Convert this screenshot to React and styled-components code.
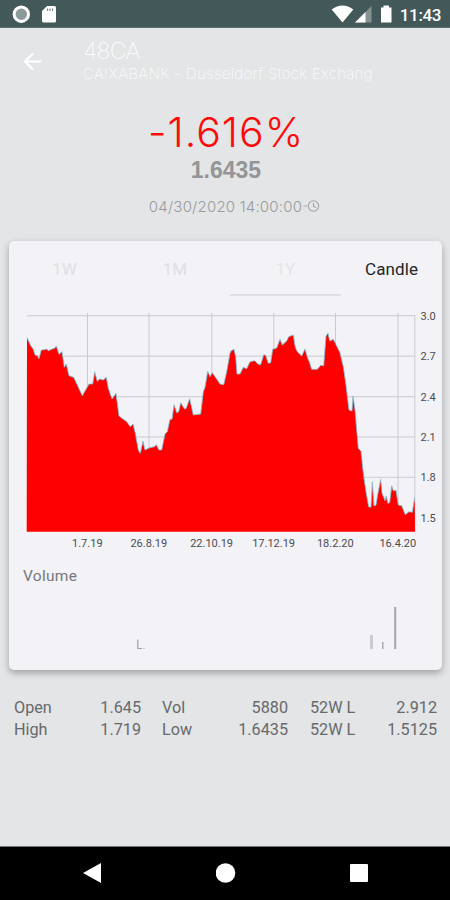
import React from 'react';
import styled, { createGlobalStyle } from 'styled-components';

const GlobalStyle = createGlobalStyle`
    * {
        box-sizing: border-box;
    }

    body {
        margin: 0;
        background-color: #e3e5e7;
    }
`;

const Screen = styled.div`
    display: flex;
    flex-direction: column;
    width: 450px;
    height: 900px;
    overflow: hidden;
    background-color: #e3e5e7;
    font-family: Roboto, sans-serif;
`;

const StatusBar = styled.div`
    display: flex;
    justify-content: space-between;
    height: 28px;
    padding: 0 9px 0 12px;
    background-color: #435858;
    border-bottom: 1px solid #5d6f6f;
`;

const StatusGroup = styled.div`
    display: flex;
    align-items: center;
    color: #fff;
    font-size: 17px;
    font-weight: 500;
    line-height: 28px;

    svg {
        display: block;
    }
`;

const Time = styled.span`
    margin-left: 7px;
    padding-top: 2px;
    letter-spacing: -.4px;
`;

const Header = styled.header`
    display: flex;
    height: 76px;
    padding: 11px 0 0 23px;
    color: #fafbfb;
    font-family: Inter, sans-serif;
    font-weight: 200;
`;

const BackButton = styled.button`
    width: 60px;
    height: 40px;
    padding: 3px 0 0;
    border: 0;
    background: none;
    text-align: left;

    svg {
        display: block;
    }
`;

const Title = styled.div`
    font-size: 23px;
    line-height: 24px;
    letter-spacing: -.6px;
    white-space: nowrap;
`;

const SubTitle = styled.div`
    font-size: 15px;
    line-height: 22px;
    letter-spacing: .3px;
    white-space: nowrap;
`;

const Quote = styled.section`
    display: flex;
    flex-direction: column;
    align-items: center;
    height: 137px;
`;

const Change = styled.div`
    height: 54px;
    margin-left: 2px;
    color: #ff0a0a;
    font-family: Inter, sans-serif;
    font-size: 41px;
    font-weight: 300;
    line-height: 56px;
    letter-spacing: 1px;
`;

const Price = styled.div`
    height: 30px;
    margin-left: 2px;
    color: #949596;
    font-family: 'Liberation Sans', Arial, sans-serif;
    font-size: 23px;
    font-weight: 700;
    line-height: 24px;
`;

const Updated = styled.div`
    display: flex;
    align-items: center;
    height: 28px;
    margin-top: 4px;
    margin-left: 20px;
    color: #999b9c;
    font-family: Inter, sans-serif;
    font-size: 15px;
    font-weight: 300;
    letter-spacing: .2px;
`;

const Card = styled.section`
    display: flex;
    flex-direction: column;
    width: 433px;
    height: 429px;
    margin-left: 9px;
    border-radius: 5px;
    background-color: #f2f2f7;
    box-shadow: 0 3px 7px rgba(0, 0, 0, .3);
`;

const Tabs = styled.div`
    display: grid;
    grid-template-columns: 111px 110px 111px 101px;
    height: 55px;
`;

const Tab = styled.button`
    height: 55px;
    padding: 2px 0 0;
    border: 0;
    border-bottom: 2px solid ${({ active }) => active ? '#dfe0e3' : 'transparent'};
    background: none;
    color: ${({ dark }) => dark ? '#242527' : '#dfe0e3'};
    font-family: Roboto, sans-serif;
    font-size: 17px;
    font-weight: ${({ active }) => active ? 300 : 400};
    letter-spacing: ${({ dark }) => dark ? '.1px' : 0};
    text-align: center;
`;

const Chart = styled.svg`
    display: block;
    font-family: Roboto, sans-serif;
    font-size: 11px;
    fill: #4b4c4f;
`;

const VolumeTitle = styled.div`
    height: 24px;
    padding-left: 14px;
    color: #77787b;
    font-size: 15.5px;
    line-height: 24px;
    letter-spacing: .3px;
`;

const Stats = styled.div`
    display: grid;
    grid-template-columns: 63px 64px 75px 72px 73px 76px;
    grid-auto-rows: 22px;
    padding: 27px 0 0 14px;
    color: #67696b;
    font-size: 16.2px;
    line-height: 22px;
`;

const Label = styled.span`
    padding-left: ${({ indent }) => indent || 0}px;
    white-space: nowrap;
`;

const Value = styled.span`
    text-align: right;
`;

const NavBar = styled.nav`
    display: flex;
    justify-content: space-between;
    align-items: center;
    height: 54px;
    margin-top: auto;
    padding: 0 82px 2px 83px;
    background-color: #000;
    border-top: 1px solid #777;

    svg {
        display: block;
    }
`;

const points = [
    [27, 337.7], [30.3, 345], [33.3, 349.3], [35, 355], [37.3, 355.5], [39, 358.7], [41.3, 350], [44.3, 349.7],
    [46.7, 349], [48.3, 350.7], [52.3, 349], [54.7, 348.3], [56.3, 346], [59, 354.3], [62, 351.7], [64.3, 367.3],
    [66.3, 364], [69, 375.7], [73.7, 377.3], [82.3, 395.7], [89, 384], [92.7, 384], [94.7, 371.7], [97.3, 381.3],
    [99.7, 379], [103.3, 380], [106.3, 377.3], [108.3, 388.3], [112, 399], [116, 393.3], [119, 416], [126.7, 421.7],
    [130.3, 426.7], [133, 424], [135.3, 433.3], [138.3, 450], [140.3, 453.3], [143, 441], [145, 450], [149, 448],
    [154.3, 446.7], [156.3, 444.7], [159, 450], [161.7, 450], [165, 434], [167.3, 431.7], [170, 419.3], [172, 419.3],
    [174, 404.7], [176.7, 412.7], [178.7, 411.7], [180.7, 402.7], [184.3, 408.7], [186, 408.7], [189.7, 398.7],
    [193.3, 415], [200.7, 414], [203.3, 391.7], [205, 387.3], [207.7, 371.3], [210, 376.7], [212.3, 372.7],
    [216.7, 379], [220, 384], [223.7, 384.7], [226.7, 371.7], [230, 353.3], [231.3, 350.7], [234, 349.3],
    [235.7, 356.7], [237, 374], [240, 374], [243.3, 367.3], [246.7, 368.7], [250, 361.7], [254.7, 360.7],
    [258, 364], [260.7, 364.7], [263.7, 354.7], [265.7, 355.3], [268.3, 363.3], [270.7, 362.7], [272.7, 349.3],
    [276.7, 348], [280, 339.3], [282.3, 345], [286.7, 341], [288.7, 336.7], [293.3, 335], [295.3, 347.3],
    [297.3, 351.7], [301.7, 356], [305, 349], [307.7, 358.3], [309.3, 361.7], [311.7, 369.3], [317.3, 369.3],
    [320.7, 365.3], [323.7, 365.7], [326, 336], [328, 333.3], [329.7, 341], [333.3, 339.3], [336.7, 346],
    [340, 352.7], [343.3, 366.7], [346, 385], [349, 410], [352, 411], [353, 396], [355, 410], [358.3, 448.3],
    [361, 451.3], [363.3, 473.3], [366, 491.7], [368.7, 506.7], [371, 507.3], [372.3, 481.7], [374, 506],
    [376, 505], [378, 493], [380.7, 479.3], [382, 493], [385, 500.7], [386.3, 496], [387.7, 503.3],
    [389.7, 502.7], [391.7, 485.7], [393.3, 490.7], [396, 490.3], [398.3, 505], [401.7, 505.7], [405.3, 514.7],
    [409, 511.7], [412.3, 512.3], [414.7, 497.3],
];

const prices = [
    ['3.0', 315.7], ['2.7', 356.2], ['2.4', 396.7], ['2.1', 437], ['1.8', 477.3], ['1.5', 517.5],
];

const dates = [
    ['1.7.19', 87.5], ['26.8.19', 149], ['22.10.19', 211.8], ['17.12.19', 273.8], ['18.2.20', 335.5], ['16.4.20', 398],
];

const volumes = [
    { x: 371.5, height: 14, width: 3, color: '#cbccd0' },
    { x: 382.8, height: 7, width: 1.5, color: '#aaabae' },
    { x: 395.2, height: 42, width: 2, color: '#a4a5a8' },
];

const stats = [
    ['Open', '1.645', 'Vol', '5880', '52W L', '2.912'],
    ['High', '1.719', 'Low', '1.6435', '52W L', '1.5125'],
];

const indents = [0, 0, 21, 0, 22, 0];

const PriceChart = () => {
    const line = points.map(p => p.join(',')).join(' ');

    return (
        <Chart width="433" height="268" viewBox="9 296 433 268">
            {prices.map(([label, y]) => (
                <g key={label}>
                    <line x1="27" x2="415" y1={y} y2={y} stroke="#cbcbcf"/>
                    <text x="420.5" y={y + 4}>{label}</text>
                </g>
            ))}
            {dates.map(([label, x]) => (
                <g key={label}>
                    <line x1={x} x2={x} y1="313" y2="531" stroke="#cbcbcf"/>
                    <text x={x - .2} y="547.3" textAnchor="middle">{label}</text>
                </g>
            ))}
            <line x1="414.8" x2="414.8" y1="315" y2="531" stroke="#cbcbcf"/>
            <polygon points={`26.7,531.7 ${line} 415,531.7`} fill="#ff0000"/>
            <polyline points={line} fill="none" stroke="#7cc4d8" strokeWidth=".8"/>
        </Chart>
    )
};

const VolumeChart = () => (
    <Chart width="433" height="70" viewBox="9 588 433 70">
        <path d="M137.8 639.5V648.5H142M143.5 648.5H144.5" fill="none" stroke="#a0a1a4" strokeWidth="1.2"/>
        {volumes.map(bar => (
            <rect
             key={bar.x}
             x={bar.x - bar.width / 2}
             y={649 - bar.height}
             width={bar.width}
             height={bar.height}
             fill={bar.color}
             />
        ))}
    </Chart>
);

const App = () => {
    return (
        <>
            <GlobalStyle/>
            <Screen>
                <StatusBar>
                    <StatusGroup>
                        <svg width="46" height="28" viewBox="12 0 46 28">
                            <circle cx="21.3" cy="14.2" r="7.2" fill="#8b9999" stroke="#fff" strokeWidth="3"/>
                            <path d="M47 6H54.5Q56 6 56 7.5V21Q56 22.5 54.5 22.5H43.5Q42 22.5 42 21V11Z" fill="#fff"/>
                            <path d="M47.5 8.5V11M50 8.5V11M52.5 8.5V11" stroke="#7d8b8b" strokeWidth="1.2"/>
                        </svg>
                    </StatusGroup>
                    <StatusGroup>
                        <svg width="62" height="28" viewBox="332 0 62 28">
                            <path d="M332.7 9.5Q343.5 1.5 354.3 9.5L343.5 22.5Z" fill="#fff"/>
                            <path d="M372.5 6V22.5H356Z" fill="#849191"/>
                            <path d="M366.5 12V22.5H356Z" fill="#fff"/>
                            <path d="M384.5 5.5H390V7.5H392.5V22.5H382V7.5H384.5Z" fill="#fff"/>
                        </svg>
                        <Time>11:43</Time>
                    </StatusGroup>
                </StatusBar>
                <Header>
                    <BackButton aria-label="Back">
                        <svg width="20" height="20" viewBox="0 0 20 20" fill="none" stroke="#fff" strokeWidth="2.2">
                            <path d="M18.5 10.5H2.5M10 2.5L2 10.5L10 18.5"/>
                        </svg>
                    </BackButton>
                    <div>
                        <Title>48CA</Title>
                        <SubTitle>CAIXABANK - Dusseldorf Stock Exchang</SubTitle>
                    </div>
                </Header>
                <Quote>
                    <Change>-1.616%</Change>
                    <Price>1.6435</Price>
                    <Updated>
                        04/30/2020 14:00:00
                        <svg width="19" height="16" viewBox="0 0 19 16" fill="none" stroke="#a3a5a6" strokeWidth="1.1">
                            <circle cx="11.5" cy="8" r="5.2"/>
                            <path d="M11.5 5V8.3L14 9.5M1.5 8H5"/>
                        </svg>
                    </Updated>
                </Quote>
                <Card>
                    <Tabs>
                        <Tab>1W</Tab>
                        <Tab>1M</Tab>
                        <Tab active>1Y</Tab>
                        <Tab dark>Candle</Tab>
                    </Tabs>
                    <PriceChart/>
                    <VolumeTitle>Volume</VolumeTitle>
                    <VolumeChart/>
                </Card>
                <Stats>
                    {stats.map(row => row.map((text, i) => (
                        i % 2
                            ? <Value key={i}>{text}</Value>
                            : <Label key={i} indent={indents[i]}>{text}</Label>
                    )))}
                </Stats>
                <NavBar>
                    <svg width="19" height="20" viewBox="0 0 19 20" fill="#fff">
                        <path d="M0 10L18 0V20Z"/>
                    </svg>
                    <svg width="20" height="20" viewBox="0 0 20 20" fill="#fff">
                        <circle cx="9.5" cy="10" r="9.8"/>
                    </svg>
                    <svg width="18" height="18" viewBox="0 0 18 18" fill="#fff">
                        <rect width="18" height="18" rx="1"/>
                    </svg>
                </NavBar>
            </Screen>
        </>
    )
};

export default App;
